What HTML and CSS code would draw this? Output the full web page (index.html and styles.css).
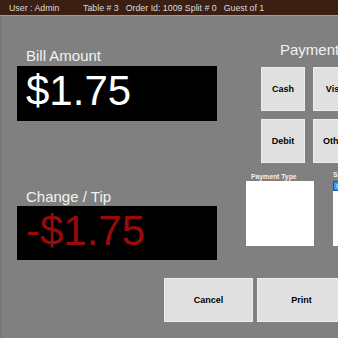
FILE: index.html
```html
<!DOCTYPE html>
<html lang="en">
<head>
    <meta charset="UTF-8">
    <meta name="viewport" content="width=device-width, initial-scale=1.0">
    <title>Payment</title>
    <link rel="stylesheet" href="styles.css">
</head>
<body>
    <div class="header">
        <span class="user">User : Admin</span>
        <span>Table # 3</span>
        <span>Order Id: 1009 Split # 0</span>
        <span>Guest of 1</span>
    </div>

    <div class="main">
        <div class="amounts">
            <div class="label">Bill Amount</div>
            <div class="display">$1.75</div>

            <div class="label change-label">Change / Tip</div>
            <div class="display negative">-$1.75</div>
        </div>

        <div class="payment">
            <div class="payment-title">Payment</div>
            <div class="tender-grid">
                <button class="btn">Cash</button>
                <button class="btn">Visa</button>
                <button class="btn">Debit</button>
                <button class="btn">Other</button>
            </div>
            <div class="lists">
                <div class="list-group">
                    <div class="list-label">Payment Type</div>
                    <div class="list-box"></div>
                </div>
                <div class="list-group split">
                    <div class="list-label">Split</div>
                    <div class="list-box">
                        <div class="list-item selected">0</div>
                    </div>
                </div>
            </div>
        </div>
    </div>

    <div class="footer">
        <button class="btn wide">Cancel</button>
        <button class="btn wide">Print</button>
    </div>
</body>
</html>
```

FILE: styles.css
```css
body {
    margin: 0;
    width: 338px;
    height: 338px;
    overflow: hidden;
    background-color: #808080;
    font-family: "Liberation Sans", Arial, sans-serif;
    box-shadow: inset 2px 0 #777777;
}
.header {
    display: flex;
    align-items: center;
    gap: 7px;
    height: 15px;
    padding-left: 9px;
    background-color: #3b1f12;
    border-bottom: 1px solid #9a9a9a;
    color: #dcdcdc;
    font-size: 8.8px;
    white-space: nowrap;
}
.header .user {
    width: 67px;
}
.main {
    display: flex;
    width: 600px;
}
.amounts {
    width: 223px;
    flex-shrink: 0;
    padding: 31px 0 0 17px;
}
.label {
    color: #f2f2f2;
    font-size: 15px;
    line-height: 17px;
    padding-left: 9px;
    margin-bottom: 2px;
}
.change-label {
    margin-top: 67px;
    margin-bottom: 1px;
}
.display {
    width: 200px;
    height: 55px;
    box-sizing: border-box;
    background-color: #000;
    color: #fff;
    font-size: 42px;
    line-height: 48px;
    padding: 1px 0 0 9px;
}
.display.negative {
    height: 54px;
    color: #9a0a0a;
}
.payment {
    padding-top: 25px;
}
.payment-title {
    color: #f2f2f2;
    font-size: 15px;
    line-height: 17px;
    padding-left: 40px;
    margin-bottom: 9px;
}
.tender-grid {
    display: grid;
    grid-template-columns: 44px 44px;
    grid-auto-rows: 44px;
    gap: 8px;
    padding-left: 21px;
}
.btn {
    background-color: #e0e0e0;
    border: 1px solid #ededed;
    color: #000;
    font-family: "Liberation Sans", Arial, sans-serif;
    font-weight: bold;
    font-size: 9px;
    padding: 0;
    white-space: nowrap;
    overflow: hidden;
}
.lists {
    display: flex;
    gap: 19px;
    margin-top: 10px;
    padding-left: 6px;
}
.list-label {
    color: #f0f0f0;
    font-size: 6.8px;
    font-weight: bold;
    line-height: 8px;
    padding-left: 5px;
}
.list-box {
    width: 68px;
    height: 65px;
    background-color: #fff;
}
.split {
    margin-top: -2px;
}
.split .list-label {
    padding-left: 0;
}
.split .list-box {
    margin-top: 2px;
    padding: 1px;
    box-sizing: border-box;
}
.list-item {
    height: 8px;
    font-size: 6px;
    line-height: 8px;
    padding-left: 2px;
}
.selected {
    background-color: #3399ff;
    color: #fff;
    outline: 1px solid #0a58b0;
}
.footer {
    display: flex;
    gap: 4px;
    padding-left: 164px;
    margin-top: 18px;
}
.btn.wide {
    flex-shrink: 0;
    width: 89px;
    height: 44px;
}
```
